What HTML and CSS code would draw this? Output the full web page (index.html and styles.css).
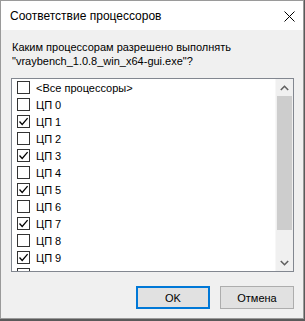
FILE: index.html
```html
<!DOCTYPE html>
<html lang="ru">
<head>
<meta charset="utf-8">
<title>Соответствие процессоров</title>
<link rel="stylesheet" href="styles.css">
</head>
<body>
<div class="window">
  <div class="titlebar">
    <span class="title">Соответствие процессоров</span>
    <svg class="close" width="11" height="11" viewBox="0 0 11 11"><path d="M0.5 0.5 L10.5 10.5 M10.5 0.5 L0.5 10.5" stroke="#000" stroke-width="1" fill="none"/></svg>
  </div>
  <div class="body">
    <p class="prompt">Каким процессорам разрешено выполнять<br>"vraybench_1.0.8_win_x64-gui.exe"?</p>
    <div class="listbox">
      <div class="items">
        <div class="row"><span class="cb"></span><span class="lbl">&lt;Все процессоры&gt;</span></div>
        <div class="row"><span class="cb"></span><span class="lbl">ЦП 0</span></div>
        <div class="row"><span class="cb on"><svg viewBox="0 0 11 11" width="11" height="11"><path d="M1.5 5.5 L4.2 8.5 L9.6 2.2" stroke="#000" stroke-width="1.3" fill="none"/></svg></span><span class="lbl">ЦП 1</span></div>
        <div class="row"><span class="cb"></span><span class="lbl">ЦП 2</span></div>
        <div class="row"><span class="cb on"><svg viewBox="0 0 11 11" width="11" height="11"><path d="M1.5 5.5 L4.2 8.5 L9.6 2.2" stroke="#000" stroke-width="1.3" fill="none"/></svg></span><span class="lbl">ЦП 3</span></div>
        <div class="row"><span class="cb"></span><span class="lbl">ЦП 4</span></div>
        <div class="row"><span class="cb on"><svg viewBox="0 0 11 11" width="11" height="11"><path d="M1.5 5.5 L4.2 8.5 L9.6 2.2" stroke="#000" stroke-width="1.3" fill="none"/></svg></span><span class="lbl">ЦП 5</span></div>
        <div class="row"><span class="cb"></span><span class="lbl">ЦП 6</span></div>
        <div class="row"><span class="cb on"><svg viewBox="0 0 11 11" width="11" height="11"><path d="M1.5 5.5 L4.2 8.5 L9.6 2.2" stroke="#000" stroke-width="1.3" fill="none"/></svg></span><span class="lbl">ЦП 7</span></div>
        <div class="row"><span class="cb"></span><span class="lbl">ЦП 8</span></div>
        <div class="row"><span class="cb on"><svg viewBox="0 0 11 11" width="11" height="11"><path d="M1.5 5.5 L4.2 8.5 L9.6 2.2" stroke="#000" stroke-width="1.3" fill="none"/></svg></span><span class="lbl">ЦП 9</span></div>
        <div class="row"><span class="cb"></span></div>
      </div>
      <div class="scrollbar">
        <div class="arrow"><svg width="9" height="6" viewBox="0 0 9 6"><path d="M0.8 5 L4.5 1.3 L8.2 5" stroke="#606060" stroke-width="1.6" fill="none"/></svg></div>
        <div class="track"><div class="thumb"></div></div>
        <div class="arrow"><svg width="9" height="6" viewBox="0 0 9 6"><path d="M0.8 1 L4.5 4.7 L8.2 1" stroke="#606060" stroke-width="1.6" fill="none"/></svg></div>
      </div>
    </div>
    <div class="buttons">
      <button class="btn default">OK</button>
      <button class="btn">Отмена</button>
    </div>
  </div>
</div>
</body>
</html>
```
FILE: styles.css
```css
html, body {
  margin: 0;
  padding: 0;
}
body {
  background: #5a5a5a;
  font-family: "Liberation Sans", Arial, sans-serif;
  font-size: 11px;
  color: #000;
  width: 305px;
  height: 321px;
  overflow: hidden;
}
.window {
  width: 302px;
  height: 317px;
  border: 1px solid #9a9a9a;
  background: #f0f0f0;
  display: flex;
  flex-direction: column;
}
.titlebar {
  height: 29px;
  background: #fff;
  display: flex;
  align-items: center;
  justify-content: space-between;
  padding: 0 8px 0 9px;
}
.title {
  font-size: 12px;
  padding-top: 1px;
}
.close {
  display: block;
  margin-top: 1px;
}
.body {
  flex: 1;
  display: flex;
  flex-direction: column;
  padding: 10px 9px 0 10px;
}
.prompt {
  margin: 0;
  padding-left: 1px;
  line-height: 14px;
  height: 28px;
}
.listbox {
  margin-top: 10px;
  width: 281px;
  height: 192px;
  border: 1px solid #828790;
  background: #fff;
  display: flex;
  overflow: hidden;
}
.items {
  flex: 1;
  display: flex;
  flex-direction: column;
  padding-left: 5px;
}
.row {
  height: 17px;
  flex: none;
  display: flex;
  align-items: center;
}
.cb {
  width: 11px;
  height: 11px;
  border: 1px solid #333;
  background: #fff;
  flex: none;
  display: flex;
}
.cb svg {
  display: block;
}
.lbl {
  margin-left: 6px;
  white-space: nowrap;
}
.scrollbar {
  width: 17px;
  background: #f0f0f0;
  border-left: 1px solid #f7f7f7;
  display: flex;
  flex-direction: column;
}
.arrow {
  height: 17px;
  display: flex;
  align-items: center;
  justify-content: center;
}
.track {
  flex: 1;
}
.thumb {
  margin: 0 1px;
  height: 134px;
  background: #cdcdcd;
}
.buttons {
  margin-top: 14px;
  width: 283px;
  display: flex;
  justify-content: flex-end;
  gap: 10px;
}
.btn {
  width: 74px;
  height: 23px;
  margin: 0;
  padding: 0;
  background: #e1e1e1;
  border: 1px solid #adadad;
  font-family: "Liberation Sans", Arial, sans-serif;
  font-size: 11px;
  color: #000;
}
.btn.default {
  border: 2px solid #0078d7;
}
```
